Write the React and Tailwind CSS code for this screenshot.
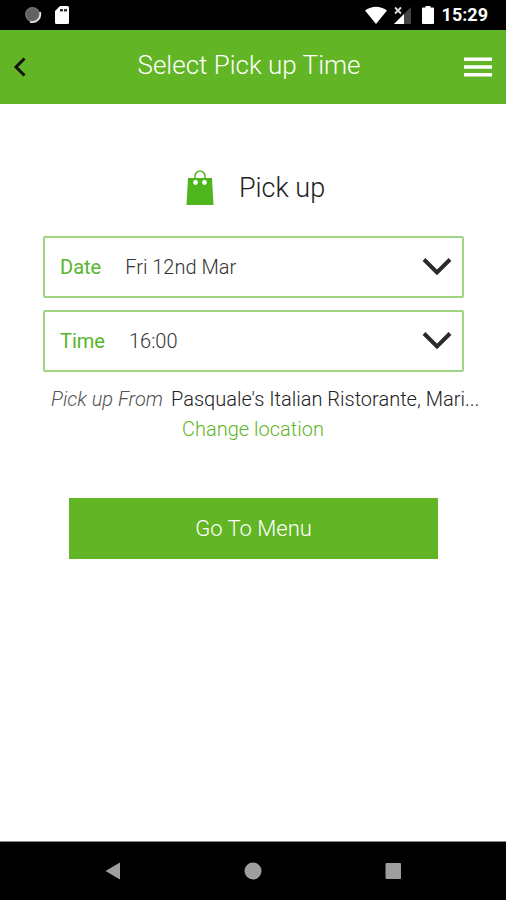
const DATES = ["Fri 12nd Mar", "Sat 13th Mar", "Sun 14th Mar"];
const TIMES = ["16:00", "16:15", "16:30", "16:45"];

function StatusBar() {
  return (
    <div className="flex h-[30px] items-center justify-between bg-black pl-6 pr-[18px] text-white">
      <div className="flex items-center gap-3">
        <svg className="h-[18px] w-[18px]" viewBox="0 0 18 18" aria-hidden="true">
          <circle cx="8.500" cy="8.500" r="7.500" fill="#777" />
          <path d="M16 6A8 8 0 0 1 6 15.800" fill="none" stroke="#e4e4e4" strokeWidth="1.800" />
          <circle cx="8.400" cy="8.400" r="6.200" fill="#626262" />
        </svg>
        <svg className="h-5 w-4" viewBox="0 0 16 20" aria-hidden="true">
          <path d="M6 1h7.500A1.500 1.500 0 0 1 15 2.500v15A1.500 1.500 0 0 1 13.500 19h-11A1.500 1.500 0 0 1 1 17.500V6z" fill="#fff" />
          <path d="M6 4h3v2.500H6zM10 4h3v2.500h-3z" fill="#333" />
        </svg>
      </div>
      <div className="flex items-center">
        <svg className="h-[18px] w-[22px]" viewBox="0 0 22 18" aria-hidden="true">
          <path d="M0 4.500Q11-3 22 4.500L11 18z" fill="#fff" />
        </svg>
        <svg className="ml-[7px] h-[18px] w-[18px]" viewBox="0 0 18 18" aria-hidden="true">
          <path d="M17 1v17H0z" fill="#444" />
          <path d="M10 8v10H0z" fill="#fff" />
          <path d="M1 1.500l6 6M7 1.500l-6 6" stroke="#ddd" strokeWidth="1.800" />
        </svg>
        <svg className="ml-[10px] h-5 w-3" viewBox="0 0 12 20" aria-hidden="true">
          <path d="M3.500 1h5v1.500H11a1 1 0 0 1 1 1V18a1 1 0 0 1-1 1H1a1 1 0 0 1-1-1V3.500a1 1 0 0 1 1-1h2.500z" fill="#fff" />
        </svg>
        <span className="ml-2 text-lg leading-5 font-bold">15:29</span>
      </div>
    </div>
  );
}

function Header() {
  return (
    <header className="flex h-[74px] items-center justify-between bg-[#62b525] px-3">
      <button type="button" aria-label="Back" className="flex w-6 items-center">
        <svg className="h-5 w-4" viewBox="0 0 16 20" fill="none" stroke="#111" strokeWidth="3" aria-hidden="true">
          <path d="M12.500 1.500L4 10l8.500 8.500" />
        </svg>
      </button>
      <h1 className="pb-1 text-[26px] leading-8 font-light text-white">Select Pick up Time</h1>
      <button type="button" aria-label="Menu" className="flex w-8 items-center justify-center">
        <svg className="h-5 w-7" viewBox="0 0 28 20" fill="#fff" aria-hidden="true">
          <path d="M0 .5h28V4H0zM0 8.250h28v3.500H0zM0 16h28v3.500H0z" />
        </svg>
      </button>
    </header>
  );
}

function PickerField({ id, label, options }) {
  return (
    <div className="grid h-[62px] items-center rounded-xs border-2 border-[#a0d384]">
      <div className="col-start-1 row-start-1 flex h-full items-center">
        <label htmlFor={id} className="pl-[15px] text-xl leading-6 text-[#58b52c]">
          {label}
        </label>
        <select
          id={id}
          className="h-full min-w-0 flex-1 appearance-none bg-transparent pl-6 text-xl leading-6 font-light text-[#333]"
        >
          {options.map((option) => (
            <option key={option}>{option}</option>
          ))}
        </select>
      </div>
      <svg
        className="pointer-events-none col-start-1 row-start-1 mr-[10px] h-5 w-[30px] justify-self-end"
        viewBox="0 0 30 20"
        fill="none"
        stroke="#2b2b2b"
        strokeWidth="4"
        aria-hidden="true"
      >
        <path d="M2 2.500l13 13L28 2.500" />
      </svg>
    </div>
  );
}

function NavBar() {
  return (
    <nav className="flex h-[59px] items-center justify-center gap-[120px] border-t border-[#888] bg-black">
      <button type="button" aria-label="Back" className="flex w-5 justify-center">
        <svg className="h-5 w-5" viewBox="0 0 20 20" fill="#9e9e9e" aria-hidden="true">
          <path d="M17 1.500v17L2.500 10z" />
        </svg>
      </button>
      <button type="button" aria-label="Home" className="flex w-5 justify-center">
        <svg className="h-5 w-5" viewBox="0 0 20 20" fill="#9e9e9e" aria-hidden="true">
          <circle cx="10" cy="10" r="8.500" />
        </svg>
      </button>
      <button type="button" aria-label="Recent apps" className="flex w-5 justify-center">
        <svg className="h-5 w-5" viewBox="0 0 20 20" fill="#9e9e9e" aria-hidden="true">
          <rect x="2.500" y="2" width="15.500" height="16" rx="1" />
        </svg>
      </button>
    </nav>
  );
}

export default function App() {
  return (
    <div className="flex min-h-screen flex-col bg-white font-['Roboto',sans-serif]">
      <StatusBar />
      <Header />
      <main className="flex flex-1 flex-col pt-[64px]">
        <div className="flex items-center justify-center gap-6 pl-1">
          <svg className="h-10 w-[30px]" viewBox="0 0 30 40" aria-hidden="true">
            <path d="M10 12V8.500a5 5.500 0 0 1 10 0V12" fill="none" stroke="#62b525" strokeWidth="1.600" />
            <path d="M3 10h24l1.500 27h-27z" fill="#4fb51c" />
            <circle cx="10.500" cy="14.500" r="2.400" fill="#fff" />
            <circle cx="19.500" cy="14.500" r="2.400" fill="#fff" />
          </svg>
          <h2 className="text-[27px] leading-10 font-light text-[#222]">Pick up</h2>
        </div>

        <div className="mt-7 mr-[42px] ml-[43px] flex flex-col gap-3">
          <PickerField id="pickup-date" label="Date" options={DATES} />
          <PickerField id="pickup-time" label="Time" options={TIMES} />
        </div>

        <div className="mt-3 mr-6 ml-[51px] flex gap-2 text-xl leading-[30px] font-light">
          <span className="shrink-0 text-[#555] italic">Pick up From</span>
          <span className="min-w-0 truncate text-[#222]">Pasquale's Italian Ristorante, Mari...</span>
        </div>
        <a href="#location" className="self-center text-xl leading-[30px] font-light text-[#62b525]">
          Change location
        </a>

        <button
          type="button"
          className="mt-[54px] mr-[68px] ml-[69px] h-[61px] bg-[#62b525] text-[22px] leading-7 font-light text-white"
        >
          Go To Menu
        </button>
      </main>
      <NavBar />
    </div>
  );
}
